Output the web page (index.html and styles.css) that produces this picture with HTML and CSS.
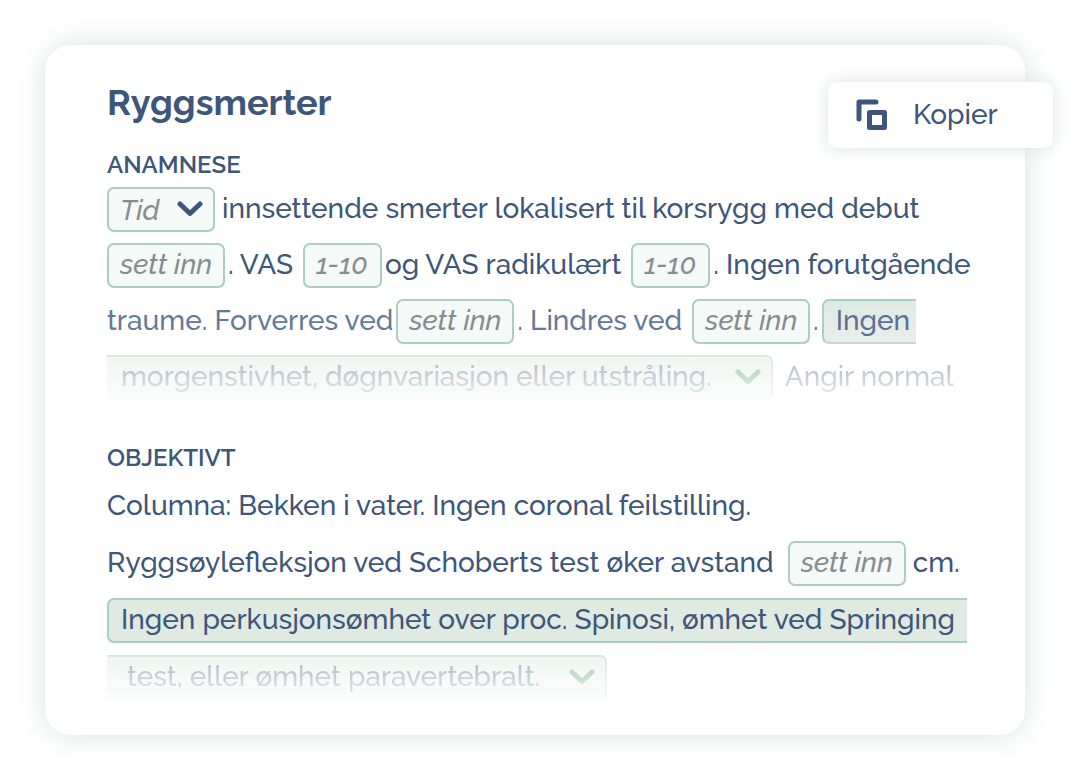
FILE: index.html
```html
<!DOCTYPE html>
<html lang="no">
<head>
<meta charset="utf-8">
<title>Ryggsmerter</title>
<link rel="stylesheet" href="styles.css">
</head>
<body>
<main class="card">
  <button class="copy" type="button">
    <svg class="copy-icon" viewBox="0 0 32 32" aria-hidden="true"><path d="M3 20V3H20" fill="none" stroke="currentColor" stroke-width="5" stroke-linecap="round" stroke-linejoin="round"/><path d="M13.500 13.500H28.500V28.500H13.500Z" fill="none" stroke="currentColor" stroke-width="5" stroke-linejoin="round"/></svg>
    <span>Kopier</span>
  </button>
  <h1 class="title">Ryggsmerter</h1>

  <section class="section">
    <h2 class="heading">ANAMNESE</h2>
    <div class="row">
      <span class="picker">
        <select class="field select" aria-label="Tid"><option>Tid</option></select>
        <svg class="chevron" viewBox="0 0 26 16" aria-hidden="true"><path d="M3 3L13 12.500L23 3"/></svg>
      </span>
      <span>innsettende smerter lokalisert til korsrygg med debut</span>
    </div>
    <div class="row tight">
      <input class="field" aria-label="Debut" placeholder="sett inn">
      <span>. VAS</span>
      <input class="field short spaced" aria-label="VAS" placeholder="1-10">
      <span>og VAS radikulært</span>
      <input class="field short spaced" aria-label="VAS radikulært" placeholder="1-10">
      <span>. Ingen forutgående</span>
    </div>
    <div class="row tight">
      <span class="soft">traume. Forverres ved</span>
      <input class="field" aria-label="Forverres ved" placeholder="sett inn">
      <span class="soft">. Lindres ved</span>
      <input class="field spaced" aria-label="Lindres ved" placeholder="sett inn">
      <span class="soft">.</span>
      <span class="clause start soft-clause">Ingen</span>
    </div>
    <div class="row wide faded">
      <button class="clause end" type="button">
        <span>morgenstivhet, døgnvariasjon eller utstråling.</span>
        <svg class="chevron" viewBox="0 0 26 16" aria-hidden="true"><path d="M3 3L13 12.500L23 3"/></svg>
      </button>
      <span>Angir normal</span>
    </div>
  </section>

  <section class="section objective">
    <h2 class="heading">OBJEKTIVT</h2>
    <div class="row"><span>Columna: Bekken i vater. Ingen coronal feilstilling.</span></div>
    <div class="row">
      <span>Ryggsøylefleksjon ved Schoberts test øker avstand</span>
      <input class="field spaced" aria-label="Avstand" placeholder="sett inn">
      <span>cm.</span>
    </div>
    <div class="row">
      <span class="clause start long">Ingen perkusjonsømhet over proc. Spinosi, ømhet ved Springing</span>
    </div>
    <div class="row faded">
      <button class="clause end indented" type="button">
        <span>test, eller ømhet paravertebralt.</span>
        <svg class="chevron" viewBox="0 0 26 16" aria-hidden="true"><path d="M3 3L13 12.500L23 3"/></svg>
      </button>
    </div>
  </section>
</main>
</body>
</html>
```
FILE: styles.css
```css
* { box-sizing: border-box; }

body {
  margin: 0;
  padding: 45px 55px 45px 45px;
  background: #fff;
  color: #3d5679;
  font: 500 28px/44px Raleway, Lato, sans-serif;
}

button, input, select { font: inherit; color: inherit; margin: 0; }

.card {
  position: relative;
  padding: 35px 54px 36px 62px;
  border-radius: 26px;
  background: #fff;
  box-shadow: 0 0 30px #dde1e0;
}

.title { margin: 0; font-size: 36px; line-height: 44px; font-weight: 700; }

.heading { margin: 0; font-size: 24px; line-height: 34px; font-weight: 600; }

.section { display: flex; flex-direction: column; gap: 12px; padding-top: 24px; }
.section .heading { margin-bottom: -7px; }
.objective { gap: 13px; padding-top: 42px; }
.objective .heading { margin-bottom: -4px; }

.row { display: flex; align-items: center; gap: 7px; height: 44px; white-space: nowrap; }
.tight { gap: 3px; }
.wide { gap: 12px; }

.field {
  width: 118px;
  height: 45px;
  padding: 0 11px 2px;
  border: 2px solid #a9cfc1;
  border-radius: 7px;
  background: #f5f9f8;
  color: #858d8f;
  font-style: italic;
}
.field::placeholder { color: #858d8f; opacity: 1; }
.short { width: 79px; }
.spaced { margin-left: 7px; }

.picker { display: grid; align-items: center; }
.picker > * { grid-area: 1 / 1; }
.picker .chevron { justify-self: end; margin-right: 12px; pointer-events: none; }
.select { width: 108px; appearance: none; }

.chevron { width: 26px; height: 16px; flex: none; }
.chevron path { fill: none; stroke: currentColor; stroke-width: 5; stroke-linecap: round; stroke-linejoin: round; }

.clause {
  display: flex;
  align-items: center;
  height: 45px;
  padding: 0 6px 0 12px;
  border: 2px solid #a9cfc1;
  background: #dfeae2;
}
.start { border-right: 0; border-radius: 7px 0 0 7px; }
.long { padding-right: 12px; }
.end { gap: 23px; border-left: 0; border-radius: 0 7px 7px 0; padding: 0 10px 0 14px; }
.indented { gap: 29px; padding-left: 20px; }
.end .chevron { color: #3a8a6a; }

.soft { color: #657a98; }
.soft-clause { color: #5b7092; background: linear-gradient(#dfeae2, #e8edec); border-bottom-color: #c2d8d0; }
.faded { mask-image: linear-gradient(rgb(0 0 0 / 46%), rgb(0 0 0 / 10%)); }

.copy {
  position: absolute;
  top: 37px;
  right: -28px;
  display: flex;
  align-items: center;
  gap: 25px;
  width: 225px;
  height: 66px;
  padding: 0 28px;
  border: 0;
  border-radius: 9px;
  background: #fff;
  box-shadow: 0 0 18px #d9e4df;
}
.copy-icon { width: 32px; height: 32px; }
```
